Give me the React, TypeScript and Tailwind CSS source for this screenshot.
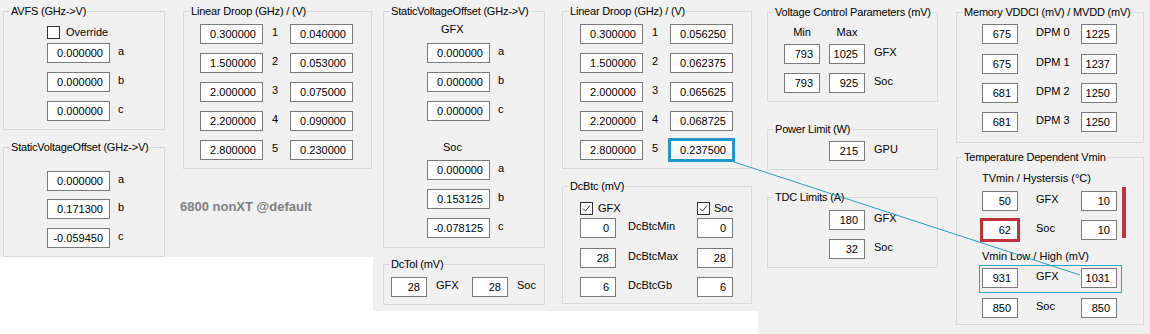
import React from "react"

function Group({ title, className, children }: { title: string; className: string; children?: React.ReactNode }) {
  return (
    <div className={`relative flex shrink-0 flex-col border border-[#d9d9d9] ${className}`}>
      <span className="-mt-[8px] ml-[6px] self-start whitespace-nowrap bg-[#f0f0f0] px-[1px] leading-[14px] tracking-[-0.2px]">
        {title}
      </span>
      {children}
    </div>
  )
}

function Input({ value, wide, className = "" }: { value: string; wide?: boolean; className?: string }) {
  return (
    <div
      className={`h-[20px] shrink-0 border border-[#7a7a7a] bg-white pr-[6px] text-right leading-[18px] ${
        wide ? "w-[63px]" : "w-[36px]"
      } ${className}`}
    >
      {value}
    </div>
  )
}

function Check({ checked }: { checked?: boolean }) {
  return (
    <span className="flex h-[13px] w-[13px] shrink-0 items-center justify-center border border-[#333333] bg-white">
      {checked && (
        <svg width="9" height="9" viewBox="0 0 9 9">
          <path d="M1 4.5 L3.5 7 L8 1.5" fill="none" stroke="#333333" strokeWidth="1" />
        </svg>
      )}
    </span>
  )
}

function AbcRows({ values, gaps }: { values: string[]; gaps: string[] }) {
  const names = ["a", "b", "c"]
  return (
    <>
      {values.map((v, i) => (
        <div key={i} className={`flex items-start ${gaps[i]}`}>
          <Input value={v} wide />
          <span className="ml-[8px] leading-[16px]">{names[i]}</span>
        </div>
      ))}
    </>
  )
}

function DroopRows({ left, right, highlight }: { left: string[]; right: string[]; highlight?: boolean }) {
  return (
    <div className="mt-[6px] flex flex-col gap-[9px]">
      {left.map((v, i) => (
        <div key={i} className="flex items-start">
          <Input value={v} wide />
          <span className="w-[27px] pl-[9px] leading-[16px]">{i + 1}</span>
          <Input
            value={right[i]}
            wide
            className={highlight && i === 4 ? "outline-[3px] -outline-offset-1 outline-[#1f97cc] outline-solid" : ""}
          />
        </div>
      ))}
    </div>
  )
}

export default function App() {
  return (
    <div className="relative flex h-[334px] w-[1150px] items-start overflow-hidden whitespace-nowrap bg-white font-['Liberation_Sans',Arial,sans-serif] text-[11px] text-black">
      {/* left block */}
      <div className="flex h-[257px] w-[373px] shrink-0 bg-[#f0f0f0]">
        <div className="ml-[3px] mt-[11px] flex flex-col">
          <Group title="AVFS (GHz->V)" className="h-[119px] w-[162px]">
            <div className="ml-[43px] mt-[8px] flex h-[13px] items-center">
              <Check />
              <span className="ml-[6px]">Override</span>
            </div>
            <div className="ml-[43px] mt-[4px] flex flex-col">
              <AbcRows values={["0.000000", "0.000000", "0.000000"]} gaps={["", "mt-[9px]", "mt-[9px]"]} />
            </div>
          </Group>
          <Group title="StaticVoltageOffset (GHz->V)" className="mt-[17px] h-[110px] w-[162px]">
            <div className="ml-[43px] mt-[17px] flex flex-col">
              <AbcRows values={["0.000000", "0.171300", "-0.059450"]} gaps={["", "mt-[8px]", "mt-[9px]"]} />
            </div>
          </Group>
        </div>
        <div className="ml-[18px] mt-[11px] flex flex-col">
          <Group title="Linear Droop (GHz) / (V)" className="h-[158px] w-[189px]">
            <div className="pl-[16px]">
              <DroopRows
                left={["0.300000", "1.500000", "2.000000", "2.200000", "2.800000"]}
                right={["0.040000", "0.053000", "0.075000", "0.090000", "0.230000"]}
              />
            </div>
          </Group>
          <span className="-ml-[3px] mt-[30px] text-[13px] font-bold leading-[16px] text-[#7f7f7f]">6800 nonXT @default</span>
        </div>
      </div>

      {/* middle block */}
      <div className="flex h-[311px] w-[385px] shrink-0 bg-[#f0f0f0]">
        <div className="ml-[10px] mt-[11px] flex flex-col">
          <Group title="StaticVoltageOffset (GHz->V)" className="h-[237px] w-[162px]">
            <div className="ml-[43px] flex flex-col">
              <span className="mt-[4px] pl-[14px] leading-[14px]">GFX</span>
              <AbcRows values={["0.000000", "0.000000", "0.000000"]} gaps={["mt-[7px]", "mt-[9px]", "mt-[9px]"]} />
              <span className="mt-[19px] pl-[16px] leading-[14px]">Soc</span>
              <AbcRows values={["0.000000", "0.153125", "-0.078125"]} gaps={["mt-[6px]", "mt-[9px]", "mt-[9px]"]} />
            </div>
          </Group>
          <Group title="DcTol (mV)" className="mt-[16px] h-[41px] w-[162px]">
            <div className="ml-[7px] mt-[6px] flex items-start">
              <Input value="28" />
              <span className="w-[45px] pl-[9px] leading-[16px]">GFX</span>
              <Input value="28" />
              <span className="pl-[9px] leading-[16px]">Soc</span>
            </div>
          </Group>
        </div>
        <div className="ml-[17px] mt-[11px] flex flex-col">
          <Group title="Linear Droop (GHz) / (V)" className="h-[158px] w-[190px]">
            <div className="pl-[17px]">
              <DroopRows
                left={["0.300000", "1.500000", "2.000000", "2.200000", "2.800000"]}
                right={["0.056250", "0.062375", "0.065625", "0.068725", "0.237500"]}
                highlight
              />
            </div>
          </Group>
          <Group title="DcBtc (mV)" className="mt-[17px] h-[118px] w-[190px]">
            <div className="ml-[17px] flex flex-col">
              <div className="mt-[9px] flex h-[13px] items-center">
                <div className="flex w-[117px] items-center">
                  <Check checked />
                  <span className="ml-[5px]">GFX</span>
                </div>
                <Check checked />
                <span className="ml-[4px]">Soc</span>
              </div>
              {[
                ["0", "DcBtcMin", "0", "mt-[3px]"],
                ["28", "DcBtcMax", "28", "mt-[10px]"],
                ["6", "DcBtcGb", "6", "mt-[9px]"],
              ].map(([a, label, b, gap]) => (
                <div key={label} className={`flex items-start ${gap}`}>
                  <Input value={a} />
                  <span className="w-[81px] pl-[12px] leading-[16px]">{label}</span>
                  <Input value={b} />
                </div>
              ))}
            </div>
          </Group>
        </div>
      </div>

      {/* right block */}
      <div className="flex h-[334px] flex-1 bg-[#f0f0f0]">
        <div className="ml-[9px] mt-[12px] flex flex-col">
          <Group title="Voltage Control Parameters (mV)" className="h-[90px] w-[171px]">
            <div className="ml-[16px] flex flex-col">
              <div className="mt-[6px] flex gap-[9px] leading-[14px]">
                <span className="w-[36px] text-center">Min</span>
                <span className="w-[36px] text-center">Max</span>
              </div>
              {[
                ["793", "1025", "GFX", "mt-[5px]"],
                ["793", "925", "Soc", "mt-[9px]"],
              ].map(([a, b, label, gap]) => (
                <div key={label} className={`flex items-start ${gap}`}>
                  <Input value={a} />
                  <Input value={b} className="ml-[9px]" />
                  <span className="ml-[9px] leading-[16px]">{label}</span>
                </div>
              ))}
            </div>
          </Group>
          <Group title="Power Limit (W)" className="mt-[27px] h-[41px] w-[171px]">
            <div className="ml-[61px] mt-[5px] flex items-start">
              <Input value="215" />
              <span className="ml-[9px] leading-[16px]">GPU</span>
            </div>
          </Group>
          <Group title="TDC Limits (A)" className="mt-[27px] h-[71px] w-[171px]">
            <div className="ml-[61px] mt-[6px] flex flex-col gap-[9px]">
              {[
                ["180", "GFX"],
                ["32", "Soc"],
              ].map(([v, label]) => (
                <div key={label} className="flex items-start">
                  <Input value={v} />
                  <span className="ml-[9px] leading-[16px]">{label}</span>
                </div>
              ))}
            </div>
          </Group>
        </div>
        <div className="ml-[18px] mt-[12px] flex flex-col">
          <Group title="Memory VDDCI (mV) / MVDD (mV)" className="h-[131px] w-[188px]">
            <div className="ml-[25px] flex flex-col">
              {[
                ["675", "DPM 0", "1225", "mt-[5px]"],
                ["675", "DPM 1", "1237", "mt-[10px]"],
                ["681", "DPM 2", "1250", "mt-[9px]"],
                ["681", "DPM 3", "1250", "mt-[9px]"],
              ].map(([a, label, b, gap]) => (
                <div key={label} className={`flex items-start ${gap}`}>
                  <Input value={a} />
                  <span className="w-[63px] pl-[18px] leading-[16px]">{label}</span>
                  <Input value={b} />
                </div>
              ))}
            </div>
          </Group>
          <Group title="Temperature Dependent Vmin" className="mt-[14px] h-[168px] w-[188px]">
            <div className="ml-[25px] flex flex-col">
              <span className="mt-[7px] leading-[14px]">TVmin / Hystersis (°C)</span>
              <div className="mt-[6px] flex items-start">
                <Input value="50" />
                <span className="w-[63px] pl-[18px] leading-[16px]">GFX</span>
                <Input value="10" />
              </div>
              <div className="mt-[9px] flex items-start">
                <Input value="62" className="outline-[3px] -outline-offset-1 outline-[#c1313c] outline-solid" />
                <span className="w-[63px] pl-[18px] leading-[16px]">Soc</span>
                <Input value="10" />
              </div>
              <span className="mt-[9px] leading-[14px]">Vmin Low / High (mV)</span>
              <div className="mt-[5px] flex items-start">
                <Input value="931" />
                <span className="w-[63px] pl-[18px] leading-[16px]">GFX</span>
                <Input value="1031" />
              </div>
              <div className="mt-[10px] flex items-start">
                <Input value="850" />
                <span className="w-[63px] pl-[18px] leading-[16px]">Soc</span>
                <Input value="850" />
              </div>
            </div>
            {/* annotations */}
            <div className="absolute left-[22px] top-[107px] h-[28px] w-[143px] border border-[#2ea3c9]" />
            <div className="absolute left-[165px] top-[29px] h-[51px] w-[4px] bg-[#c0333e]" />
          </Group>
        </div>
      </div>

      <svg className="pointer-events-none absolute left-0 top-0" width="1150" height="334">
        <line x1="731" y1="161" x2="1080" y2="275" stroke="#2a9cc6" strokeWidth="1" />
      </svg>
    </div>
  )
}
